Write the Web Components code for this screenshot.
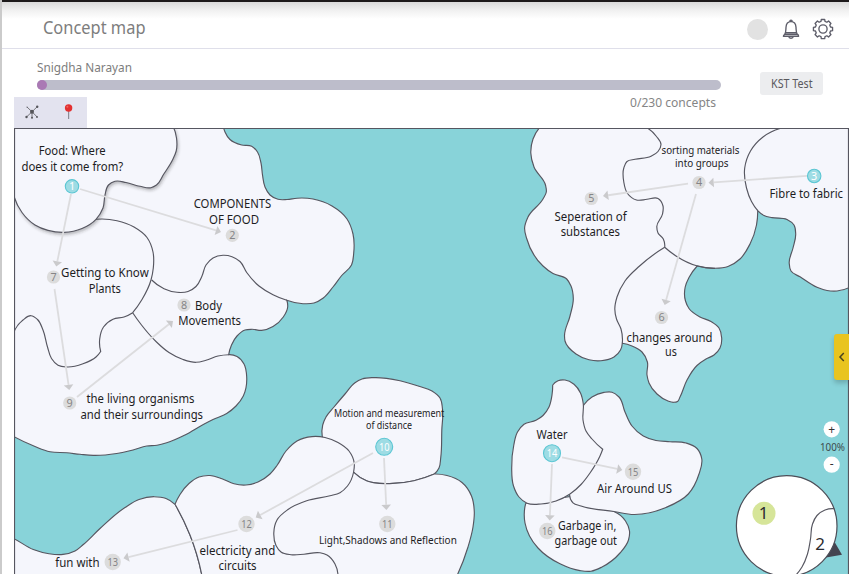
<!DOCTYPE html>
<html lang="en">
<head>
<meta charset="utf-8">
<title>Concept map</title>
<style>
html,body{margin:0;height:100%;overflow:hidden;background:#fff}
body{font-family:"Noto Sans","Open Sans",sans-serif}
</style>
</head>
<body>
<concept-app></concept-app>
<script>
const SVG_FONT = 'font-family:"Noto Sans","Open Sans",sans-serif';

// Smooth curve through points; "|" marks a sharp corner.
function smooth(str) {
  const parts = str.split('|').map(s => s.trim().split(/\s+/).map(p => p.split(',').map(Number)));
  let d = '', last = null;
  for (const part of parts) {
    const pts = last ? [last, ...part] : part;
    if (!last) d += `M${pts[0]}`;
    const n = pts.length;
    const dist = (a, b) => Math.hypot(a[0] - b[0], a[1] - b[1]) || 1;
    const tan = pts.map((p, i) => {
      if (i === 0 || i === n - 1) return null;
      const a = pts[i - 1], b = pts[i + 1], da = dist(a, p), db = dist(p, b);
      const t = [0, 1].map(k => (p[k] - a[k]) / da * db + (b[k] - p[k]) / db * da);
      const m = Math.hypot(t[0], t[1]) || 1;
      return [t[0] / m, t[1] / m];
    });
    for (let i = 0; i < n - 1; i++) {
      const a = pts[i], b = pts[i + 1], L = dist(a, b), h = L * .35;
      const chord = [(b[0] - a[0]) / L, (b[1] - a[1]) / L];
      const end = t => { const k = 2 * (chord[0] * t[0] + chord[1] * t[1]); return [k * chord[0] - t[0], k * chord[1] - t[1]]; };
      const ta = tan[i] || (tan[i + 1] ? end(tan[i + 1]) : chord);
      const tb = tan[i + 1] || (tan[i] ? end(tan[i]) : chord);
      const f = v => v.toFixed(2);
      d += `C${f(a[0] + ta[0] * h)},${f(a[1] + ta[1] * h)} ${f(b[0] - tb[0] * h)},${f(b[1] - tb[1] * h)} ${b}`;
    }
    last = pts[n - 1];
  }
  return d;
}

// Text set to a fixed measure.
customElements.define('fit-text', class extends HTMLElement {
  connectedCallback() {
    const w = +this.getAttribute('w'), s = +this.getAttribute('size');
    this.attachShadow({mode: 'open'}).innerHTML = `<style>:host{display:block;line-height:0}svg{display:block;overflow:visible}text{${SVG_FONT};font-size:${s}px;fill:currentColor}</style>
    <svg width="${w}" height="12"><text x="0" y="12" textLength="${w}" lengthAdjust="spacingAndGlyphs">${this.textContent}</text></svg>`;
  }
});

customElements.define('app-header', class extends HTMLElement {
  connectedCallback() {
    const pts = [];
    for (let i = 0; i < 8; i++) {
      const c = i * 45 - 90;
      for (const [o, r] of [[-15, 7.8], [-10, 9.7], [10, 9.7], [15, 7.8]]) {
        const a = (c + o) * Math.PI / 180;
        pts.push((11 + r * Math.cos(a)).toFixed(2) + ',' + (11 + r * Math.sin(a)).toFixed(2));
      }
    }
    this.attachShadow({mode: 'open'}).innerHTML = `<style>
    :host{box-sizing:border-box;display:flex;align-items:flex-start;justify-content:space-between;height:49px;border-top:2px solid #1d1a1b;border-bottom:1px solid #dfdfea;padding:0 15px 0 41px;background:linear-gradient(#dadada,#f0f0f0 8px,#fff 17px);color:#7d7d7d}
    .icons{display:flex;align-items:center;padding-top:16px}
    .avatar{width:21px;height:21px;border-radius:50%;background:#e2e2e2;margin-right:13px}
    svg{display:block;fill:none;stroke:#5d5d69;stroke-width:1.35;stroke-linejoin:round;stroke-linecap:round}
    .bell{margin-right:11px}
    ::slotted(fit-text){padding-top:20px}
    </style>
    <slot></slot>
    <div class="icons"><div class="avatar"></div>
    <svg class="bell" width="20" height="22" viewBox="0 0 20 22"><path d="M3.8 16.2C5 14.6 4.8 12.5 5 9.2C5.2 5.8 7 3.6 10 3.6S14.8 5.8 15 9.2C15.2 12.5 15 14.6 16.2 16.2M4.4 14.6H15.6M2.4 18.2C2.4 17.2 3.2 16.6 3.8 16.2H16.2C17 16.6 17.6 17.2 17.6 18.2ZM8.8 3.4C8.8 1.6 11.2 1.6 11.2 3.4M7.7 18.4C8 20.8 12 20.8 12.3 18.4"/></svg>
    <svg width="22" height="22" viewBox="0 0 22 22"><polygon points="${pts.join(' ')}"/><circle cx="11" cy="11" r="4.1"/></svg>
    </div>`;
  }
});

customElements.define('progress-panel', class extends HTMLElement {
  connectedCallback() {
    this.attachShadow({mode: 'open'}).innerHTML = `<style>
    :host{box-sizing:border-box;display:flex;justify-content:space-between;height:48px;padding:10.5px 26px 0 35px;color:#7d7d7d}
    .track{margin-top:8px;width:684px;height:10px;border-radius:5px;background:#bdbdcb}
    .knob{width:10px;height:10px;border-radius:50%;background:#aa79b4}
    .btn{margin-top:12.5px;width:63px;height:23px;border-radius:3px;background:#ecedef;color:#59595d;display:flex;justify-content:center;align-items:center}
    .btn fit-text{padding-bottom:3.5px}
    </style>
    <div><slot></slot><div class="track"><div class="knob"></div></div></div>
    <div class="btn"><fit-text w="41.5" size="12.2">KST Test</fit-text></div>`;
  }
});

customElements.define('map-toolbar', class extends HTMLElement {
  connectedCallback() {
    this.attachShadow({mode: 'open'}).innerHTML = `<style>
    :host{display:flex;justify-content:space-between;align-items:flex-start;height:31px;padding:0 133px 0 12px;color:#858585}
    .tools{display:flex;width:73px;height:31px;background:#e3e3ef}
    svg{display:block}
    ::slotted(fit-text){margin-top:-2px}
    </style>
    <div class="tools"><svg width="73" height="31">
      <g stroke="#77777c" stroke-width="1" fill="#55555a"><path d="M18 14.8L13 10M18 14.8L23 9.9M18 14.8L12.5 20M18 14.8L23.2 20M18 14.8V20.5"/>
      <g stroke="none"><circle cx="18" cy="14.8" r="2"/><circle cx="23.2" cy="9.7" r="1.2"/><circle cx="12.5" cy="20" r="1.2"/><circle cx="23" cy="20" r=".9"/><circle cx="18" cy="20.8" r="1"/><circle cx="13" cy="10" r=".6"/></g></g>
      <path d="M54.6 13V22" stroke="#8c8c96" stroke-width="1.2"/><circle cx="54.6" cy="11" r="3.7" fill="#e33030"/><circle cx="53.4" cy="9.8" r="1" fill="#ee6a62"/>
    </svg></div><slot></slot>`;
  }
});

// Canvas of the map, in page coordinates.
customElements.define('concept-canvas', class extends HTMLElement {
  connectedCallback() {
    const comp = '223.3,126 225,132 230,139.5 241.7,145 251.7,146.2 257.5,152 261,163 262.5,175 265,187 270,195 278,199.3 287,199.5 297,198.2 313,199 332,206 347,219 353,234 353.7,253.3 351.5,265 341.7,275.5 333,287 323.3,298 314,303 303,303.7 286.8,300.3';
    const regions = [
      // north-west land
      comp + '|287.7,306.7 283.3,317 273,326.5 261.7,330.4 252,329.3 245,330 237,336 231.5,345 228.7,354.7|237,356.5 244,364 246.7,377 243.3,396 236,406 226.7,413.5 213,419.5 203.3,424.5 185,435 166.7,442.8 157,445.2 146.7,446 133,450 116.7,453.5 93.3,455.4 80,454.3 66.7,452.8 50,451.7 35,446.5 14,436.7|8,436|8,120|223.3,126',
      // north-east land
      '541,126 533,139 530.8,153 534,167 545.5,185 546.3,192 543,199 528,217 524.6,228 526.5,238 543,266 553,273.5 566.7,279 571,286 573.3,298.5 570,316 564.5,336 565,341 576,354 589,359.8 601,360.7 614,357 620.5,350 622.3,343.3|632,346 642,352 647.4,362 647,375 649,383 657,394 668,401 673.5,402.3 677.5,401.5 680,397 687,380 697,365.5 706,359 714,355 720,348 721.7,338 719,328 711,321.5 700,317 689,308.5 685.5,301 685.2,287 689,277.5 697.2,266|715,268.3 728,266.5 740,259 750,244 756.5,225 757.7,210.7|764,215.5 772,217.6 787,219.5 794,225 795.7,234 793,248 789.2,263 791,271 800,276.8 817,287.3 827,290.5 837,291 849,287.7|856,286|856,120|541,126',
      // motion
      '322.3,437 322.7,425 326,417 334,407 345,394 355,382.7 362,379 374,377.6 400,380.8 419,386.3 432,391 440,398 442.5,409 441.8,430 440.7,458 439,468 434.3,474|414,480.7 388,483.6 367,481 353.7,472.3|330,470|322.3,437',
      // light
      '353.7,472.3|367,481 388,483.6 414,480.7 434.3,474|447,475.5 462,482.5 471.5,496 474.3,512 473,527 468,547 457.3,575|457,590|260,590|260,500|353.7,472.3',
      // fun with
      '8,536|14,538.7 33.3,549.5 49,553.7 63,554.4 75,551 83,544.8 100,528.5 125,507.5 139,499.5 154,496.7 166,498.5 175,504.3|190,535 202,576|202,590|8,590|8,536',
      // electricity
      '175,504.3|180,494.5 189,483.5 199,477 210,475.5 222,478.7 234,483.8 246,485 258,482 270,474 277,465.5 286,451 297,441 312,436.6 325,437.5 338,442.5 349,451 354.2,463 353.6,472 347.5,486 340,492.7 330,495.8 306.7,500.8 288,509.5 277,520 273.8,533 276,545.5 281,552 291,554.7 304,554.2 320,552.8 327,555 335,564 338,576|338,590|202,590|202,576|190,535 175,504.3',
      // garbage
      '525.7,503.3 525,523 529.5,536 538,548 560,563.8 580,570.6 591,571.2 602,567 620,553 628.5,540 629.5,531 625.5,521 614.5,511.8|580,495|525.7,503.3',
      // air
      '583.7,405|592,397 604,392.4 612,392.2 619,397 625,412 632,426 643.3,436 656,440.5 670,441.7 686,443 697,448.5 701.8,459 699,474 688.3,494 666,507.5 634,514.5 614,511.5 581,506 573,502.8 569.6,495|560,470|583.7,405',
      // water
      '552.7,385|558,380.8 565,380 574,384.3 580.5,393 583.3,404 583,420 586,431 592,439 602.7,449.3|600,456 590,473 581,484.5 570,494 556,501 541,504 527,503.2 519,497 513.5,486 511.7,468 513.8,445 517.5,432 524,424.2 536,420.3 543,415.5 549,407 552,395 552.7,385'
    ];
    const inner = [
      '286.8,300.3 273,294.7 259,286 246.7,272.5 240,261.5 232,256.7 223,255.3 213,258 206,265 202,276 196,286.5 188,291.5 177,292.3 164,288.7 151.7,280',
      '96,219.3 117,220.7 134,227 147,237.5 153,252 153.3,268 151,280 142,299.5 132.7,312.7|124,317 113,319.2 103.5,327 99.7,339 100.7,351.5|96,357 83,363.8 67,367 58,365.3 51.5,358.5 47.5,347 43,330 37.5,319.5 31,315.7 23,320 14,331.7',
      '132.7,312.7 141.5,325 156,341.5 169,352.5 183,359.5 196,362.3 206,360.3 218,356 228.7,354.7',
      '646,127 656.5,136.5 661,144.5 658,151.5 651,156.3 635,159.3 627,161.5 623.8,168 623.8,182 627.5,193.5 636.5,200 647,199.3 658,198.5 663,206 662.5,214 656.8,226.5 658,233 663.3,239 664.7,247.3|676,256 696.7,265.8 715,268.3',
      '622.3,343.3 621,329 616.5,319 614.8,309 617,297 625,281 639,266.5 664.7,247.3',
      '780,128.5 763,137 750.5,151 744.7,168 746.5,188 751.5,201.5 757.7,210.7'
    ];
    const food = '173,126 176.5,138 176.2,151 173,159 163.5,174.5 156.5,185 151,187.7 140,186.3 126,182.5 115,181.3 108.5,185 105,195 103,208 96,219.3 82,228.5 64,232.4 48,230.4 35,225 22,212.5 14.2,197|8,190|8,120|173,126';
    const nodes = [[1,72,186.3,6.7,1],[2,232.3,235.3,6.6],[3,814.2,176,6.7,1],[4,699,182.5,6.6],[5,591.3,198.5,6.6],[6,661.5,317.5,6.6],[7,53.5,277,6.6],[8,184,305,6.6],[9,69.7,403,6.6],[10,384.2,446.8,8.5,1],[11,387.3,524,8.2],[12,246.5,524,8.2],[13,112.7,562,8.2],[14,552,453.2,8.5,1],[15,633,471.7,8.2],[16,547.3,531,8.2]];
    const labels = [
      ['Food: Where',38.7,105.7,155.4],['does it come from?',21.5,123.2,170.9],['COMPONENTS',193.7,271.3,208],['OF FOOD',209,259,223.8],
      ['Getting to Know',61,148.7,277.4],['Plants',88.7,120.8,292.7],['Body',195,222,309.5],['Movements',178.3,241,325],
      ['the living organisms',86.5,194.5,403.3],['and their surroundings',80.5,203,418.6],['Seperation of',554.5,626.7,220.6],['substances',560.7,620,236],
      ['sorting materials',661.5,739.5,153.5,11],['into groups',675,728.5,167,11],['Fibre to fabric',769.5,843,198.4],
      ['changes around',626.5,712.5,341.6],['us',665,676.8,356.4],['Motion and measurement',334,444.3,417,10],['of distance',366,412,429.3,10],
      ['Light,Shadows and Reflection',319,456.8,544.3,11.3],['electricity and',199.5,275.3,554.5],['circuits',218.5,256.5,569.8],['fun with',55.3,99.6,566.9],
      ['Water',536.5,567.5,438.6],['Air Around US',597,672,493],['Garbage in,',558,616.3,530.2],['garbage out',554.5,617,545.2]];
    const arrows = [[71,194,56.3,266.5],[80,189,221,232],[54.5,289,69.3,390],[77,397,173,321],[807,175.8,708.5,182.8],[688,183.7,603,196],[696,194,664.7,305],[384,458,386.4,510],[373,453,255.7,517.5],[237.5,530,123.5,558.3],[562,457.3,622.3,470],[552,464,549.7,520.5]];
    const arrow = ([a, b, c, d]) => {
      const L = Math.hypot(c - a, d - b), u = (c - a) / L, v = (d - b) / L, x = c - u * 5.2, y = d - v * 5.2;
      return `<path d="M${a},${b}L${x},${y}" stroke="#dcdcde" stroke-width="1.8"/><path d="M${c},${d}L${x - v * 4.8},${y + u * 4.8}L${x + v * 4.8},${y - u * 4.8}Z" fill="#cacacc"/>`;
    };
    this.attachShadow({mode: 'open'}).innerHTML = `<style>
    :host{display:block;position:relative;flex:1;min-height:0;margin-left:12px;background:#88d3d9;overflow:hidden}
    svg{display:block}text{${SVG_FONT}}
    .land path{fill:#f5f6fc;stroke:#565660;stroke-width:1.15}
    .line{fill:none;stroke:#565660;stroke-width:1.15}
    .label{font-size:12.6px;fill:#1d1d1f}
    .num{text-anchor:middle;font-size:10.8px;fill:#858587}
    .num.on{fill:#fff}
    .tab{position:absolute;right:0;top:206px;width:15px;height:46px;display:flex;align-items:center;background:#e9c41f;border-radius:3px 0 0 3px;box-shadow:0 3px 5px #0003}
    .edge{fill:none;stroke:#565660;stroke-width:1.2}
    </style>
    <svg width="835" height="446" viewBox="14 128 835 446">
      <defs><filter id="soft" x="-10%" y="-10%" width="125%" height="125%"><feDropShadow dx="1" dy="2" stdDeviation="1.5" flood-color="#333" flood-opacity=".3"/></filter></defs>
      <g class="land">${regions.map(r => `<path d="${smooth(r)}"/>`).join('')}</g>
      ${inner.map(r => `<path class="line" d="${smooth(r)}"/>`).join('')}
      <g class="land"><path filter="url(#soft)" d="${smooth(food)}"/></g>
      ${arrows.map(arrow).join('')}
      ${nodes.map(([n, x, y, r, on]) => `<circle cx="${x}" cy="${y}" r="${r}" fill="${on ? '#9edce4' : '#dcdcdc'}" ${on ? 'stroke="#5bc6d3" stroke-width="1.1"' : ''}/><text class="num ${on ? 'on' : ''}" x="${x}" y="${y + 3.8}" ${n > 9 ? 'textLength="10.6" lengthAdjust="spacingAndGlyphs"' : ''}>${n}</text>`).join('')}
      ${labels.map(([t, a, b, y, s]) => `<text class="label" x="${a}" y="${y}" ${s ? `style="font-size:${s}px"` : ''} textLength="${(b - a).toFixed(1)}" lengthAdjust="spacingAndGlyphs">${t}</text>`).join('')}
      <circle cx="831.7" cy="429.3" r="8.1" fill="#fff"/><circle cx="831.7" cy="464.7" r="8.1" fill="#fff"/>
      <text x="831.7" y="433.7" text-anchor="middle" font-size="12" fill="#333">+</text>
      <text x="831.7" y="468.3" text-anchor="middle" font-size="12" fill="#333">-</text>
      <text x="820" y="451" font-size="10.4" fill="#3c4a4d" textLength="25" lengthAdjust="spacingAndGlyphs">100%</text>
      <path d="M834.3 541.5L842 554.8L826 557.5Z" fill="#444450"/>
      <circle cx="786.7" cy="526" r="50.3" fill="#fff" stroke="#4d4d57" stroke-width="1.2"/>
      <path class="line" d="${smooth('834.5,508.7 825,510 817,515.5 812.5,524 810.5,539 807.5,554 802,567 795,576')}"/>
      <circle cx="764" cy="513.3" r="11.5" fill="#d6e599"/>
      <text x="763.6" y="519" text-anchor="middle" font-size="17" fill="#2c2c30">1</text>
      <text x="820.2" y="549.7" text-anchor="middle" font-size="17" fill="#2c2c30">2</text>
      <path class="edge" d="M14.5 574V128.5H848.5V574"/>
    </svg>
    <div class="tab"><svg width="15" height="14"><path d="M9.8 3.1L6 7L9.8 10.9" fill="none" stroke="#4a4420" stroke-width="1.5"/></svg></div>`;
  }
});

customElements.define('concept-app', class extends HTMLElement {
  connectedCallback() {
    this.attachShadow({mode: 'open'}).innerHTML = `<style>
    :host{box-sizing:border-box;display:flex;flex-direction:column;width:849px;height:574px;border-left:2px solid #cbcbcb;background:#fff}
    </style>
    <app-header><fit-text w="102.5" size="18">Concept map</fit-text></app-header>
    <progress-panel><fit-text w="95" size="13">Snigdha Narayan</fit-text></progress-panel>
    <map-toolbar><fit-text w="86" size="12.8">0/230 concepts</fit-text></map-toolbar>
    <concept-canvas></concept-canvas>`;
  }
});
</script>
</body>
</html>
